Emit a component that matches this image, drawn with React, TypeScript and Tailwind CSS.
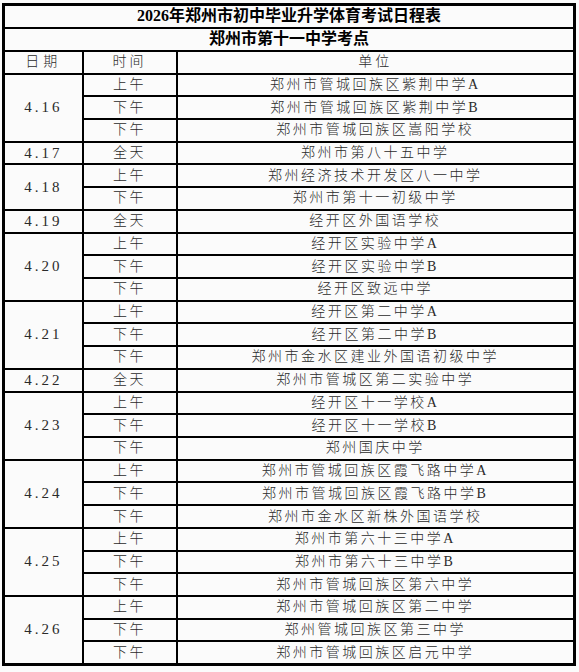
import React from 'react';

type Row = { date: string; slots: [string, string][] };

const rows: Row[] = [
  { date: '4.16', slots: [['上午', '郑州市管城回族区紫荆中学A'], ['下午', '郑州市管城回族区紫荆中学B'], ['下午', '郑州市管城回族区嵩阳学校']] },
  { date: '4.17', slots: [['全天', '郑州市第八十五中学']] },
  { date: '4.18', slots: [['上午', '郑州经济技术开发区八一中学'], ['下午', '郑州市第十一初级中学']] },
  { date: '4.19', slots: [['全天', '经开区外国语学校']] },
  { date: '4.20', slots: [['上午', '经开区实验中学A'], ['下午', '经开区实验中学B'], ['下午', '经开区致远中学']] },
  { date: '4.21', slots: [['上午', '经开区第二中学A'], ['下午', '经开区第二中学B'], ['下午', '郑州市金水区建业外国语初级中学']] },
  { date: '4.22', slots: [['全天', '郑州市管城区第二实验中学']] },
  { date: '4.23', slots: [['上午', '经开区十一学校A'], ['下午', '经开区十一学校B'], ['下午', '郑州国庆中学']] },
  { date: '4.24', slots: [['上午', '郑州市管城回族区霞飞路中学A'], ['下午', '郑州市管城回族区霞飞路中学B'], ['下午', '郑州市金水区新株外国语学校']] },
  { date: '4.25', slots: [['上午', '郑州市第六十三中学A'], ['下午', '郑州市第六十三中学B'], ['下午', '郑州市管城回族区第六中学']] },
  { date: '4.26', slots: [['上午', '郑州市管城回族区第二中学'], ['下午', '郑州管城回族区第三中学'], ['下午', '郑州市管城回族区启元中学']] },
];

const cell = 'border-2 border-black p-0 text-center align-middle';

export default function App() {
  return (
    <div
      className="min-h-[672px] bg-[#fbfbfb] pt-[3px] pl-[2px] text-[#2a2a2a]"
      style={{ fontFamily: '"Liberation Serif", "Noto Sans CJK SC", serif' }}
    >
      <table className="w-[574px] table-fixed border-collapse border-[3px] border-black text-[14px] leading-none">
        <colgroup>
          <col className="w-[79px]" />
          <col className="w-[94px]" />
          <col />
        </colgroup>
        <tbody>
          <tr className="h-[23px]">
            <td colSpan={3} className={`${cell} text-[16px] font-bold text-black`}>
              2026年郑州市初中毕业升学体育考试日程表
            </td>
          </tr>
          <tr className="h-[23px]">
            <td colSpan={3} className={`${cell} text-[16px] font-bold text-black`}>
              郑州市第十一中学考点
            </td>
          </tr>
          <tr className="h-[23px]">
            <td className={`${cell} font-light tracking-[4px]`}>日期</td>
            <td className={`${cell} font-light tracking-[3px]`}>时间</td>
            <td className={`${cell} font-light tracking-[3px]`}>单位</td>
          </tr>
          {rows.map((r) =>
            r.slots.map(([time, unit], i) => (
              <tr key={r.date + i} className="h-[22.72px]">
                {i === 0 && (
                  <td rowSpan={r.slots.length} className={`${cell} tracking-[3px] text-[15px]`}>
                    {r.date}
                  </td>
                )}
                <td className={`${cell} font-light tracking-[2.5px]`}>{time}</td>
                <td className={`${cell} font-light tracking-[2.5px]`}>{unit}</td>
              </tr>
            ))
          )}
        </tbody>
      </table>
    </div>
  );
}
